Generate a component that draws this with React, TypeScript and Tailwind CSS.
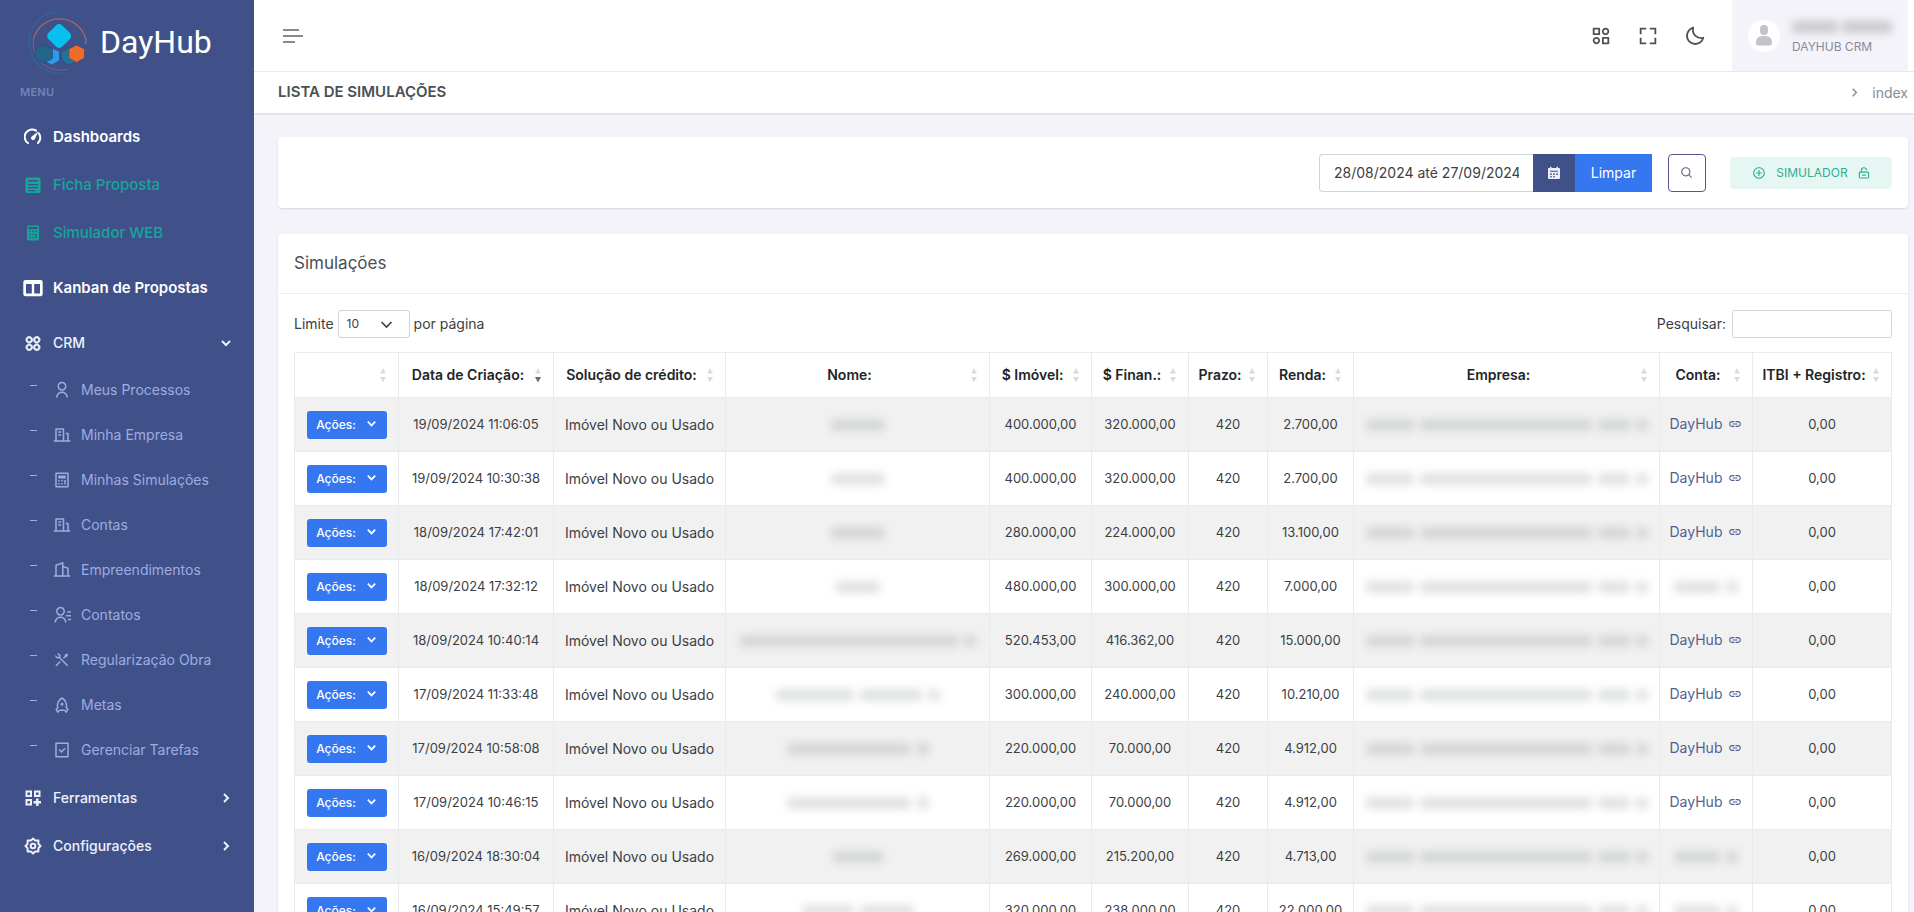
import type { ReactNode } from "react";
import type { IconType } from "react-icons";
import {
  RiAddCircleLine,
  RiApps2Line,
  RiBuilding2Line,
  RiBuildingLine,
  RiCalculatorLine,
  RiContactsLine,
  RiRocketLine,
  RiTaskLine,
  RiToolsLine,
  RiUserLine,
} from "react-icons/ri";
import { BiCategoryAlt, BiFullscreen, BiMoon, BiSearch, BiSolidCalculator } from "react-icons/bi";
import { MdLink } from "react-icons/md";

function Logo() {
  return (
    <svg viewBox="0 0 72 72" className="size-[72px]" fill="none" aria-hidden="true">
      <path d="M33 5.500A30 30 0 0 0 10 20A31 31 0 0 0 10 53A31 31 0 0 0 40 67" stroke="#2a6a9c" strokeWidth="2" opacity=".6" />
      <path d="M9.500 33A27 27 0 0 1 62 34L61.500 38" stroke="#a8656b" strokeWidth="1.300" />
      <path d="M9.500 33A27 27 0 0 0 44 63" stroke="#8a5a78" strokeWidth="1" />
      <path d="M19 47L27 41.500L35.500 45.500V54.500L28 59L19.500 55Z" fill="#2f9be8" stroke="#2b3f78" strokeWidth=".6" />
      <path d="M37 46L45 41.500L52 46V55L45 59.500L38 55Z" fill="#20739b" stroke="#2b3f78" strokeWidth=".6" />
      <path d="M20 38.500L28.500 43V52.500L20 57L11.500 52.500V43Z" fill="#23668c" stroke="#2b3f78" strokeWidth=".6" strokeLinejoin="round" />
      <path d="M52.500 39L60.500 43V52L52.500 56.500L44.800 52V43Z" fill="#ee6c2b" stroke="#4a3c66" strokeWidth=".6" strokeLinejoin="round" />
      <rect x="25.500" y="20.500" width="19.500" height="19.500" rx="4.500" transform="rotate(45 35.500 30)" fill="#08bfee" />
    </svg>
  );
}

function SpeedIcon() {
  return (
    <svg viewBox="0 0 18 18" className="size-[18px]" fill="none" aria-hidden="true">
      <path d="M4 15A7.300 7.300 0 0 1 12 2.700M14.800 5.300A7.300 7.300 0 0 1 14 15" stroke="currentColor" strokeWidth="2" strokeLinecap="round" />
      <path d="M14.500 3.200L10.800 11A2 2 0 1 1 7.500 8.800Z" fill="currentColor" />
    </svg>
  );
}

function FormIcon() {
  return (
    <svg viewBox="0 0 18 18" className="size-[18px]" fill="none" aria-hidden="true">
      <path fillRule="evenodd" clipRule="evenodd" d="M3 1.500H15A1.500 1.500 0 0 1 16.500 3V15.500A1.500 1.500 0 0 1 15 17H3A1.500 1.500 0 0 1 1.500 15.500V3A1.500 1.500 0 0 1 3 1.500ZM4 4V5.500H14V4ZM4 8V9.300H14V8ZM4 11V12.300H14V11ZM4 14V15.200H11V14Z" fill="currentColor" />
    </svg>
  );
}

function BoardIcon() {
  return (
    <svg viewBox="0 0 20 18" className="h-[18px] w-5 shrink-0" aria-hidden="true">
      <path fillRule="evenodd" clipRule="evenodd" d="M2.500 1H17.500A2.200 2.200 0 0 1 19.700 3.200V15A2.200 2.200 0 0 1 17.500 17.200H2.500A2.200 2.200 0 0 1 .3 15V3.200A2.200 2.200 0 0 1 2.500 1ZM3 5V14.500H8.800V5ZM11.200 5V14.500H17V5Z" fill="currentColor" />
    </svg>
  );
}

function WidgetsIcon() {
  return (
    <svg viewBox="0 0 18 18" className="size-[18px]" fill="none" stroke="currentColor" strokeWidth="2" aria-hidden="true">
      <path d="M2.500 2.500H7V7H2.500ZM11 2.500H15.500V7H11ZM2.500 11H7V15.500H2.500Z" />
      <path d="M13.300 9.500V17M9.500 13.300H17" strokeWidth="2.400" />
    </svg>
  );
}

function GearIcon() {
  return (
    <svg viewBox="0 0 20 20" className="size-[18px] shrink-0" fill="none" stroke="currentColor" strokeWidth="2.200" strokeLinejoin="round" aria-hidden="true">
      <path d="M10 1.600L12.400 4H16V7.600L18.400 10L16 12.400V16H12.400L10 18.400L7.600 16H4V12.400L1.600 10L4 7.600V4H7.600Z" />
      <circle cx="10" cy="10" r="2.600" />
    </svg>
  );
}

function Chevron({ className, strokeWidth = 2 }: { className: string; strokeWidth?: number }) {
  return (
    <svg viewBox="0 0 12 12" className={className} fill="none" stroke="currentColor" strokeWidth={strokeWidth} aria-hidden="true">
      <path d="M2 4L6 8L10 4" />
    </svg>
  );
}

function LockIcon() {
  return (
    <svg viewBox="0 0 14 14" className="size-3" fill="none" stroke="currentColor" strokeWidth="1.300" aria-hidden="true">
      <rect x="1.600" y="6" width="10.800" height="6.800" rx="1" />
      <path d="M4 6V4A3 3 0 0 1 10 3.800M5 9.500H9" />
    </svg>
  );
}

function CalendarIcon() {
  return (
    <svg viewBox="0 0 14 14" className="size-[14px]" aria-hidden="true">
      <path fill="currentColor" fillRule="evenodd" d="M3 .8H4.500V2H9.500V.8H11V2H12A1 1 0 0 1 13 3V12A1 1 0 0 1 12 13H2A1 1 0 0 1 1 12V3A1 1 0 0 1 2 2H3ZM3 4.800V5.800H11V4.800ZM3 7.500V8.700H5V7.500ZM6 7.500V8.700H8V7.500ZM9 7.500V8.700H11V7.500ZM3 10.200V11.200H5V10.200ZM6 10.200V11.200H8V10.200Z" />
    </svg>
  );
}

function MainItem({ icon, label, className, arrow }: { icon: ReactNode; label: string; className: string; arrow?: "down" | "right" }) {
  return (
    <a href="#" className={`flex items-center gap-[11px] pr-[22px] pl-6 ${className}`}>
      <span className="flex w-[18px] justify-center">{icon}</span>
      <span className="flex-1 whitespace-nowrap">{label}</span>
      {arrow && <Chevron className={arrow === "down" ? "size-3" : "size-3 -rotate-90"} />}
    </a>
  );
}

const crmItems: { label: string; icon: IconType }[] = [
  { label: "Meus Processos", icon: RiUserLine },
  { label: "Minha Empresa", icon: RiBuildingLine },
  { label: "Minhas Simulações", icon: RiCalculatorLine },
  { label: "Contas", icon: RiBuildingLine },
  { label: "Empreendimentos", icon: RiBuilding2Line },
  { label: "Contatos", icon: RiContactsLine },
  { label: "Regularização Obra", icon: RiToolsLine },
  { label: "Metas", icon: RiRocketLine },
  { label: "Gerenciar Tarefas", icon: RiTaskLine },
];

function Sidebar() {
  return (
    <aside className="w-[254px] shrink-0 overflow-hidden bg-[#405189]">
      <a href="#" className="flex h-20 items-center gap-1 pt-1 pl-6 text-white">
        <Logo />
        <span className="font-['Roboto',sans-serif] text-[32px] font-normal">DayHub</span>
      </a>
      <p className="mb-[9px] flex h-6 items-center pl-5 text-[11px] font-semibold tracking-wide text-[#7482b8]">MENU</p>
      <nav className="text-sm">
        <MainItem className="h-12 text-[15px] font-semibold text-white" icon={<SpeedIcon />} label="Dashboards" />
        <MainItem className="h-12 text-[15px] font-medium text-[#14a69b]" icon={<FormIcon />} label="Ficha Proposta" />
        <MainItem className="h-12 text-[15px] font-medium text-[#14a69b]" icon={<BiSolidCalculator size={18} />} label="Simulador WEB" />
        <MainItem className="h-[62px] text-[15px] font-semibold text-white" icon={<BoardIcon />} label="Kanban de Propostas" />
        <MainItem className="h-12 font-medium text-[#eef1fb]" icon={<RiApps2Line size={19} strokeWidth={1} stroke="currentColor" />} label="CRM" arrow="down" />
        <ul className="pb-0.5 text-[#9dace2]">
          {crmItems.map(({ label, icon: Icon }) => (
            <li key={label}>
              <a href="#" className="flex h-[45px] items-center pl-[30px]">
                <span className="mb-2 h-px w-[7px] bg-current" />
                <Icon size={18} className="ml-4 shrink-0" />
                <span className="ml-[10px] whitespace-nowrap">{label}</span>
              </a>
            </li>
          ))}
        </ul>
        <MainItem className="h-12 font-medium text-[#eef1fb]" icon={<WidgetsIcon />} label="Ferramentas" arrow="right" />
        <MainItem className="h-12 font-medium text-[#eef1fb]" icon={<GearIcon />} label="Configurações" arrow="right" />
      </nav>
    </aside>
  );
}

function Topbar() {
  return (
    <header className="flex h-[72px] shrink-0 items-center border-b border-[#e9ebec] bg-white pr-[6px] pl-[29px]">
      <button type="button" aria-label="Alternar menu" className="flex flex-col gap-1 text-[#8a8a8a]">
        <span className="h-0.5 w-4 bg-current" />
        <span className="h-0.5 w-5 bg-current" />
        <span className="h-0.5 w-3 bg-current" />
      </button>
      <div className="mr-[26px] ml-auto flex items-center gap-[25px] text-[#4f5255]">
        <button type="button" aria-label="Aplicativos"><BiCategoryAlt size={22} /></button>
        <button type="button" aria-label="Tela cheia"><BiFullscreen size={22} /></button>
        <button type="button" aria-label="Modo escuro"><BiMoon size={22} /></button>
      </div>
      <button type="button" aria-label="Conta do usuário" className="flex h-full w-44 items-center gap-3 bg-[#f3f3f9] px-4 text-left">
        <svg viewBox="0 0 32 32" className="size-8 shrink-0" aria-hidden="true">
          <circle cx="16" cy="16" r="16" fill="#fff" />
          <rect x="12" y="5" width="8" height="10" rx="4" fill="#c3c3c8" />
          <path d="M8 22.500C8 18 11 16 16 16S24 18 24 22.500V23.500Q24 25.500 22 25.500H10Q8 25.500 8 23.500Z" fill="#c3c3c8" />
        </svg>
        <span className="flex flex-col gap-1.5 pt-1">
          <span className="flex gap-1 blur-[4px]">
            <span className="h-3 w-[46px] rounded bg-[#c9c9ce]" />
            <span className="h-3 w-[50px] rounded bg-[#c9c9ce]" />
          </span>
          <span className="text-xs leading-4 whitespace-nowrap text-[#878a99]">DAYHUB CRM</span>
        </span>
      </button>
    </header>
  );
}

function Blurred({ segments }: { segments: number[] }) {
  return (
    <span className="flex justify-center gap-1.5 blur-[4px]">
      {segments.map((width, i) => (
        <span key={i} className="h-3 shrink-0 rounded bg-[#606a72]/20" style={{ width }} />
      ))}
    </span>
  );
}

type Row = {
  date: string;
  name: number[];
  property: string;
  financed: string;
  income: string;
  hidden?: boolean;
};

const rows: Row[] = [
  { date: "19/09/2024 11:06:05", name: [54], property: "400.000,00", financed: "320.000,00", income: "2.700,00" },
  { date: "19/09/2024 10:30:38", name: [54], property: "400.000,00", financed: "320.000,00", income: "2.700,00" },
  { date: "18/09/2024 17:42:01", name: [54], property: "280.000,00", financed: "224.000,00", income: "13.100,00" },
  { date: "18/09/2024 17:32:12", name: [44], property: "480.000,00", financed: "300.000,00", income: "7.000,00", hidden: true },
  { date: "18/09/2024 10:40:14", name: [218, 12], property: "520.453,00", financed: "416.362,00", income: "15.000,00" },
  { date: "17/09/2024 11:33:48", name: [78, 62, 12], property: "300.000,00", financed: "240.000,00", income: "10.210,00" },
  { date: "17/09/2024 10:58:08", name: [124, 12], property: "220.000,00", financed: "70.000,00", income: "4.912,00" },
  { date: "17/09/2024 10:46:15", name: [124, 12], property: "220.000,00", financed: "70.000,00", income: "4.912,00" },
  { date: "16/09/2024 18:30:04", name: [50], property: "269.000,00", financed: "215.200,00", income: "4.713,00", hidden: true },
  { date: "16/09/2024 15:49:57", name: [52, 54], property: "320.000,00", financed: "238.000,00", income: "22.000,00", hidden: true },
];

const columns = [
  { label: "", width: "w-[104px]" },
  { label: "Data de Criação:", width: "w-[155px]", sorted: true },
  { label: "Solução de crédito:", width: "w-[172px]" },
  { label: "Nome:", width: "w-[264px]" },
  { label: "$ Imóvel:", width: "w-[102px]" },
  { label: "$ Finan.:", width: "w-[97px]" },
  { label: "Prazo:", width: "w-[79px]" },
  { label: "Renda:", width: "w-[86px]" },
  { label: "Empresa:", width: "" },
  { label: "Conta:", width: "w-[93px]" },
  { label: "ITBI + Registro:", width: "w-[139px]" },
];

function SortArrows({ sorted }: { sorted?: boolean }) {
  return (
    <svg viewBox="0 0 8 16" className="h-4 w-2 shrink-0" aria-hidden="true">
      <path d="M4 1L7 6.500H1Z" fill="#dcdcdc" />
      <path d="M4 15.500L1 10H7Z" fill={sorted ? "#6b6b6b" : "#dcdcdc"} />
    </svg>
  );
}

function SimulationsTable() {
  return (
    <table className="w-full table-fixed border-collapse text-center text-[13px] text-[#3c4043]">
      <thead>
        <tr className="h-[45px]">
          {columns.map(({ label, width, sorted }, i) => (
            <th key={i} className={`border border-[#e9ebec] p-0 text-sm font-semibold text-[#212529] ${width}`}>
              <div className="flex items-center gap-1.5 pr-[11px] pl-[9px] whitespace-nowrap">
                <span className="flex-1">{label}</span>
                <SortArrows sorted={sorted} />
              </div>
            </th>
          ))}
        </tr>
      </thead>
      <tbody>
        {rows.map((row) => (
          <tr key={row.date} className="h-[54px] odd:bg-[#f1f1f1] [&>td]:border [&>td]:border-[#e9ebec] [&>td]:p-0">
            <td>
              <button type="button" className="inline-flex h-7 w-20 items-center justify-center gap-2.5 rounded-[3px] bg-[#3577f1] text-xs font-medium text-white">
                Ações:
                <Chevron className="mb-0.5 size-[11px]" />
              </button>
            </td>
            <td>{row.date}</td>
            <td className="text-sm">Imóvel Novo ou Usado</td>
            <td><Blurred segments={row.name} /></td>
            <td>{row.property}</td>
            <td>{row.financed}</td>
            <td>420</td>
            <td>{row.income}</td>
            <td><Blurred segments={[48, 172, 32, 12]} /></td>
            <td>
              {row.hidden ? (
                <Blurred segments={[46, 12]} />
              ) : (
                <a href="#" className="inline-flex items-center gap-1.5 text-sm text-[#535f93]">
                  DayHub
                  <MdLink size={14} />
                </a>
              )}
            </td>
            <td>0,00</td>
          </tr>
        ))}
      </tbody>
    </table>
  );
}

export default function App() {
  return (
    <div className="flex h-screen overflow-hidden bg-[#f3f3f9] font-['Inter',sans-serif] text-[#212529]">
      <Sidebar />
      <div className="flex min-w-0 flex-1 flex-col">
        <Topbar />
        <div className="flex h-[41px] shrink-0 items-center justify-between bg-white pr-[6px] pl-6 shadow-[0_1px_2px_rgba(56,65,74,0.15)]">
          <h1 className="text-[15px] font-semibold text-[#495057]">LISTA DE SIMULAÇÕES</h1>
          <nav className="flex items-center gap-3 text-sm text-[#878a99]">
            <Chevron className="size-[11px] -rotate-90" strokeWidth={1.5} />
            <a href="#">index</a>
          </nav>
        </div>
        <main className="flex-1 overflow-y-auto pt-6 pr-[6px] pl-6 [scrollbar-width:none]">
          <section className="flex h-[71px] items-center justify-end rounded-sm bg-white px-4 shadow-[0_1px_2px_rgba(56,65,74,0.15)]">
            <div className="flex h-[38px]">
              <input
                type="text"
                aria-label="Período"
                defaultValue="28/08/2024 até 27/09/2024"
                className="w-[214px] rounded-l border border-r-0 border-[#ced4da] px-3.5 text-sm text-[#3c4043] outline-none"
              />
              <button type="button" aria-label="Abrir calendário" className="flex w-[42px] items-center justify-center bg-[#405189] text-[#eceefa]">
                <CalendarIcon />
              </button>
              <button type="button" className="w-[77px] bg-[#3577f1] text-sm text-white">Limpar</button>
            </div>
            <button type="button" aria-label="Buscar" className="mr-6 ml-4 flex size-[38px] items-center justify-center rounded-sm border border-[#5a5590] text-[#6c6f85]">
              <BiSearch size={14} />
            </button>
            <button type="button" className="flex h-8 w-[162px] items-center justify-center gap-2.5 rounded-sm bg-[#e6f7f3] text-xs text-[#2fae90]">
              <RiAddCircleLine size={14} />
              SIMULADOR
              <LockIcon />
            </button>
          </section>

          <section className="mt-[26px] rounded-sm bg-white pb-4 shadow-[0_1px_2px_rgba(56,65,74,0.15)]">
            <h2 className="flex h-[60px] items-center border-b border-[#eeeff1] px-4 text-[17px] text-[#495057]">Simulações</h2>
            <div className="px-4 pt-4">
              <div className="mb-[14px] flex h-7 items-center justify-between text-sm text-[#3c4043]">
                <label className="flex items-center gap-1">
                  Limite
                  <span className="grid h-7 items-center">
                    <select defaultValue="10" className="col-start-1 row-start-1 h-7 w-[72px] appearance-none rounded-[3px] border border-[#ced4da] bg-white pl-2 text-xs">
                      <option>10</option>
                      <option>25</option>
                      <option>50</option>
                    </select>
                    <Chevron className="pointer-events-none col-start-1 row-start-1 mr-4 size-[15px] justify-self-end" strokeWidth={1.3} />
                  </span>
                  por página
                </label>
                <label className="flex items-center gap-1.5">
                  Pesquisar:
                  <input type="search" className="h-7 w-40 rounded-[3px] border border-[#ced4da] bg-white px-2 outline-none" />
                </label>
              </div>
              <SimulationsTable />
            </div>
          </section>
        </main>
      </div>
    </div>
  );
}
